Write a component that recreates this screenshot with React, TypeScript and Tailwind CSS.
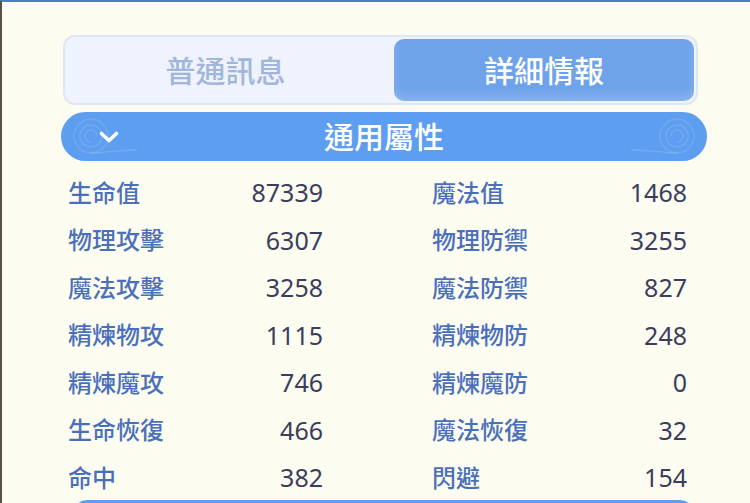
import React from 'react';

type Stat = { label: string; value: string };

const rows: [Stat, Stat][] = [
  [{ label: '生命值', value: '87339' }, { label: '魔法值', value: '1468' }],
  [{ label: '物理攻擊', value: '6307' }, { label: '物理防禦', value: '3255' }],
  [{ label: '魔法攻擊', value: '3258' }, { label: '魔法防禦', value: '827' }],
  [{ label: '精煉物攻', value: '1115' }, { label: '精煉物防', value: '248' }],
  [{ label: '精煉魔攻', value: '746' }, { label: '精煉魔防', value: '0' }],
  [{ label: '生命恢復', value: '466' }, { label: '魔法恢復', value: '32' }],
  [{ label: '命中', value: '382' }, { label: '閃避', value: '154' }],
];

const font = { fontFamily: '"Noto Sans", "Noto Sans CJK TC", sans-serif' };

const Swirl = ({ flip }: { flip?: boolean }) => (
  <svg
    width="70"
    height="49"
    viewBox="0 0 70 49"
    fill="none"
    stroke="white"
    strokeOpacity="0.12"
    strokeWidth="1.5"
    className={flip ? 'scale-x-[-1]' : ''}
  >
    <circle cx="24" cy="24" r="17" />
    <circle cx="24" cy="24" r="11" />
    <path d="M24 30 a6 6 0 1 1 6 -6" />
    <path d="M24 41 C40 41 46 38 70 38" />
  </svg>
);

const StatCell = ({ stat }: { stat: Stat }) => (
  <div className="flex items-center justify-between w-[255px]">
    <span className="text-[24px] leading-none font-medium text-[#4b70bb]">{stat.label}</span>
    <span className="text-[25px] leading-none text-[#3b3d5d]">{stat.value}</span>
  </div>
);

export default function App() {
  return (
    <div
      className="w-[750px] h-[503px] overflow-hidden bg-[#fcfcf1] border-t-[2px] border-t-[#4f7fc9] border-l-[2px] border-l-[#5b5048]"
      style={font}
    >
      {/* tabs */}
      <div className="ml-[61px] mt-[33px] w-[635px] h-[70px] rounded-[12px] bg-[#eef3fd] border-2 border-[#dfe7f6] flex p-[2px]">
        <div className="w-[327px] flex items-center justify-center text-[30px] font-medium text-[#a2b6da] pr-[10px]">
          普通訊息
        </div>
        <div className="flex-1 rounded-[10px] bg-[#6ea2e9] shadow-[inset_0_-6px_10px_rgba(255,255,255,0.18)] flex items-center justify-center text-[30px] font-medium text-white">
          詳細情報
        </div>
      </div>

      {/* section header */}
      <div className="relative ml-[59px] mt-[7px] w-[646px] h-[49px] rounded-full bg-[#5e9ef0] flex items-center justify-center overflow-hidden">
        <div className="absolute left-[6px] top-0">
          <Swirl />
        </div>
        <div className="absolute right-[6px] top-0">
          <Swirl flip />
        </div>
        <svg
          className="absolute left-[38px] top-[19px]"
          width="20"
          height="12"
          viewBox="0 0 20 12"
          fill="none"
          stroke="white"
          strokeWidth="3.6"
          strokeLinecap="round"
          strokeLinejoin="round"
        >
          <path d="M2.5 2.5 L10 9.5 L17.5 2.5" />
        </svg>
        <span className="text-[30px] font-medium text-white leading-none">通用屬性</span>
      </div>

      {/* stats */}
      <div className="ml-[66px] mt-[8px] flex flex-col">
        {rows.map(([a, b], i) => (
          <div key={i} className="h-[47.5px] flex items-center gap-[109px]">
            <StatCell stat={a} />
            <StatCell stat={b} />
          </div>
        ))}
      </div>

      {/* next section peeking */}
      <div className="ml-[71px] mt-[-2px] w-[621px] h-[20px] rounded-t-[14px] bg-[#5e9ef0]" />
    </div>
  );
}
